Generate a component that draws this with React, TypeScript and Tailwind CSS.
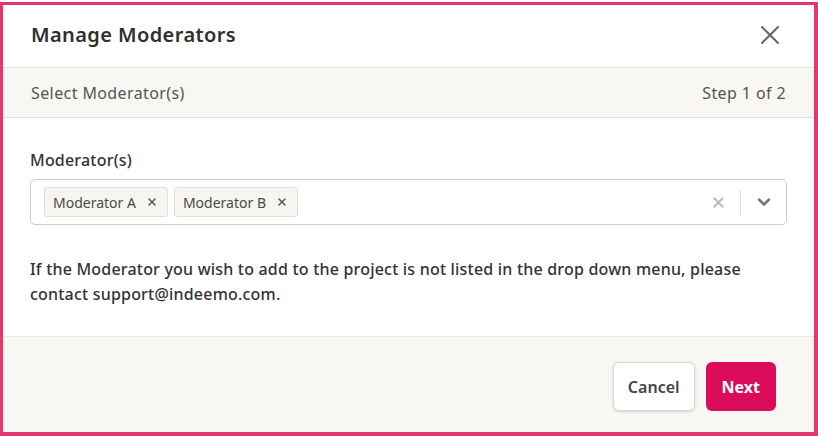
import { X, ChevronDown } from "lucide-react";

const moderators = ["Moderator A", "Moderator B"];

export default function App() {
  return (
    <div
      className="w-[818px] h-[436px] bg-white pt-[2px]"
      style={{ fontFamily: '"Noto Sans", "Open Sans", sans-serif' }}
    >
      <div className="flex h-[434px] flex-col border-[3px] border-r-[4px] border-b-[4px] border-[#e2386b] bg-white">
        <div className="flex h-[62px] shrink-0 items-center justify-between pl-[28px] pr-[34px]">
          <h1 className="-mt-[3px] text-[20px] font-semibold tracking-[0.4px] text-[#2f2f2f]">Manage Moderators</h1>
          <svg width="20" height="20" viewBox="0 0 20 20" className="-mt-[3px]">
            <path d="M2 2 L18 18 M18 2 L2 18" stroke="#666" strokeWidth="2" strokeLinecap="round" />
          </svg>
        </div>
        <div className="flex h-[51px] shrink-0 items-center justify-between border-y border-[#e2e1dc] bg-[#f8f7f3] pl-[28px] pr-[28px] text-[16px] tracking-[0.4px] text-[#555]">
          <span>Select Moderator(s)</span>
          <span>Step 1 of 2</span>
        </div>
        <div className="flex-1 px-[27px] pt-[30px]">
          <label className="block text-[16px] font-medium tracking-[0.2px] text-[#333]">Moderator(s)</label>
          <div className="mt-[7px] flex h-[46px] items-center rounded-[5px] border border-[#ccc] pl-[13px] pr-[12px]">
            <div className="flex flex-1 gap-[6px]">
              {moderators.map((m) => (
                <div
                  key={m}
                  className="flex h-[30px] items-center gap-[10px] rounded-[3px] border border-[#e0dfd9] bg-[#f6f5f0] pl-[8px] pr-[9px] text-[14px] text-[#4a4a4a]"
                >
                  <span>{m}</span>
                  <X className="h-[12px] w-[12px] text-[#555]" strokeWidth={3} />
                </div>
              ))}
            </div>
            <X className="h-[17px] w-[17px] text-[#bbb]" strokeWidth={2.8} />
            <div className="mx-[13px] h-[25px] w-px bg-[#ddd]" />
            <ChevronDown className="h-[20px] w-[20px] text-[#777]" strokeWidth={3} />
          </div>
          <p className="mt-[32px] text-[16px] font-medium leading-[25px] tracking-[0.2px] text-[#333]">
            If the Moderator you wish to add to the project is not listed in the drop down menu, please contact support@indeemo.com.
          </p>
        </div>
        <div className="flex h-[96px] shrink-0 items-center justify-end gap-[11px] border-t border-[#eae9e4] bg-[#f8f7f3] pr-[38px] pt-[4px]">
          <button className="h-[49px] rounded-[6px] border border-[#d8d8d4] bg-white px-[14px] text-[16px] font-semibold text-[#444] shadow-[0_1px_3px_rgba(0,0,0,0.15)]">
            Cancel
          </button>
          <button className="h-[49px] rounded-[6px] bg-[#da0b59] px-[16px] text-[16px] font-bold text-white">
            Next
          </button>
        </div>
      </div>
    </div>
  );
}
